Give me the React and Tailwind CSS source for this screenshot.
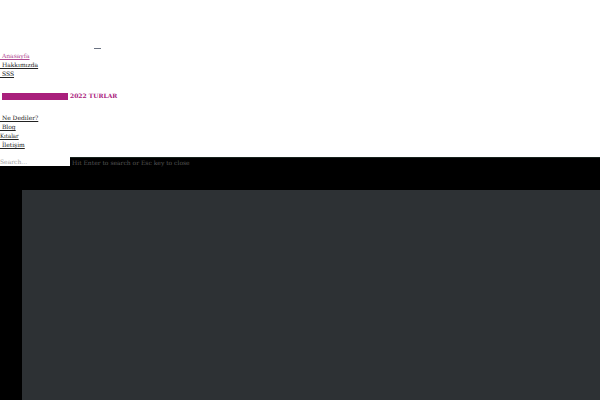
import React from "react";

const topLinks = [
  { label: "Anasayfa", active: true },
  { label: "Hakkımızda" },
  { label: "SSS" },
];

const bottomLinks = [
  { label: "Ne Dediler?" },
  { label: "Blog" },
  { label: "Kıtalar", plain: true },
  { label: "İletişim" },
];

const NavLink = ({ label, active, plain }) => (
  <li>
    <a
      href="#"
      className={`block w-fit underline ${active ? "text-[#b04a92]" : "text-[#222222]"} ${plain ? "font-['DejaVu_Serif_Condensed','DejaVu_Serif',serif]" : ""}`}
    >
      {plain ? label : `\u00a0${label}`}
    </a>
  </li>
);

const Header = () => (
  <header className="bg-white pt-12">
    <button
      type="button"
      aria-label="Menu"
      className="ml-[94px] block h-px w-[7px] bg-gray-500"
    />
    <nav className="pt-0.5">
      <ul>
        {topLinks.map((link) => (
          <NavLink key={link.label} {...link} />
        ))}
      </ul>
      <h4 className="flex items-center gap-0.5 pt-[11px] pb-[10px] pl-0.5 font-bold leading-[14px] text-[#a9207c]">
        <span className="h-[7px] w-[66px] bg-[#a9207c]" />
        2022 TURLAR
      </h4>
      <ul>
        {bottomLinks.map((link) => (
          <NavLink key={link.label} {...link} />
        ))}
      </ul>
    </nav>
  </header>
);

const SearchBar = () => (
  <form className="flex border-t border-[#18231d]">
    <input
      type="text"
      aria-label="Search"
      placeholder="Search..."
      className="-mt-px h-[9px] w-[70px] bg-white leading-[9px] text-black outline-none placeholder:text-[#a3a3a3]"
    />
    <span className="pl-0.5 text-[#555555]">
      Hit Enter to search or Esc key to close
    </span>
  </form>
);

const App = () => {
  return (
    <div className="flex min-h-screen flex-col bg-black font-['DejaVu_Serif',serif] text-[6px] leading-[9px]">
      <Header />
      <div className="h-2 bg-white" />
      <SearchBar />
      <main className="mt-[23px] ml-[22px] grow bg-[#2d3134]" />
    </div>
  );
};

export default App;
